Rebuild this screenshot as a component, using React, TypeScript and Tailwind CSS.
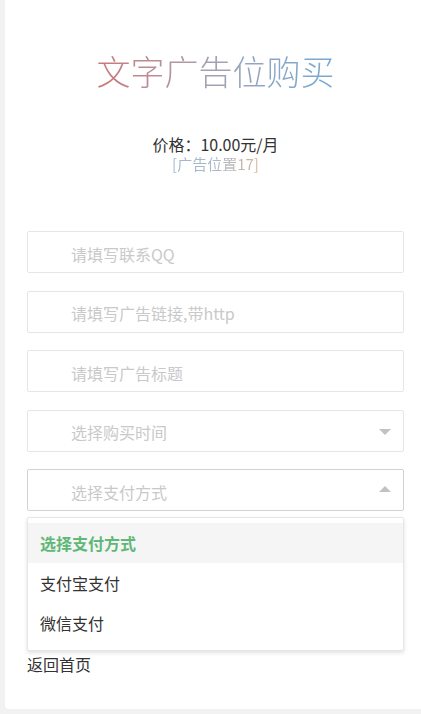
import { useState } from "react";

const fields = [
  { name: "qq", placeholder: "请填写联系QQ" },
  { name: "url", placeholder: "请填写广告链接,带http" },
  { name: "title", placeholder: "请填写广告标题" },
];

const payOptions = ["选择支付方式", "支付宝支付", "微信支付"];

function Caret({ up }: { up?: boolean }) {
  return (
    <span
      className={
        up
          ? "absolute right-[12px] top-1/2 -mt-[4px] h-0 w-0 border-x-[6px] border-b-[6px] border-x-transparent border-b-[#c2c2c2]"
          : "absolute right-[12px] top-1/2 -mt-[2px] h-0 w-0 border-x-[6px] border-t-[6px] border-x-transparent border-t-[#c2c2c2]"
      }
    />
  );
}

export default function App() {
  const [values, setValues] = useState<Record<string, string>>({});
  const [payOpen, setPayOpen] = useState(true);

  return (
    <div
      className="min-h-screen bg-[#f2f2f2] pl-[5px]"
      style={{ fontFamily: '"Noto Sans CJK SC", "Liberation Sans", sans-serif' }}
    >
      <div className="h-[709px] w-[416px] rounded-bl-[4px] bg-white pl-[22px] pr-[17px] pt-[51px]">
        <div className="text-center">
          <h1 className="inline-block bg-gradient-to-r from-[#c97878] via-[#a2a2b4] to-[#72a9d6] bg-clip-text text-[34px] font-light leading-[40px] text-transparent">
            文字广告位购买
          </h1>
        </div>

        <div className="mt-[43px] text-center text-[16px] leading-[20px] text-[#333]">
          价格：10.00元/月
        </div>
        <div className="text-center text-[15px] leading-[20px]">
          <span className="bg-gradient-to-r from-[#9fb6cf] via-[#a9b8c8] to-[#d2b49a] bg-clip-text text-transparent">
            [广告位置17]
          </span>
        </div>

        <form
          className="mt-[57px] flex flex-col gap-[17.5px]"
          onSubmit={(e) => e.preventDefault()}
        >
          {fields.map((f) => (
            <input
              key={f.name}
              value={values[f.name] ?? ""}
              onChange={(e) =>
                setValues((v) => ({ ...v, [f.name]: e.target.value }))
              }
              placeholder={f.placeholder}
              className="h-[42px] w-full rounded-[2px] border border-[#e6e6e6] bg-white pl-[43px] pt-[3px] text-[16px] text-[#333] outline-none placeholder:text-[#c9c9c9]"
            />
          ))}

          <div className="relative h-[42px] rounded-[2px] border border-[#e6e6e6] bg-white">
            <span className="flex h-full items-center pl-[43px] pt-[3px] text-[16px] text-[#c9c9c9]">
              选择购买时间
            </span>
            <Caret />
          </div>

          <div className="relative">
            <div
              onClick={() => setPayOpen((o) => !o)}
              className="relative h-[42px] cursor-pointer rounded-[2px] border border-[#d2d2d2] bg-white"
            >
              <span className="flex h-full items-center pl-[43px] pt-[3px] text-[16px] text-[#c9c9c9]">
                选择支付方式
              </span>
              <Caret up={payOpen} />
            </div>

            {payOpen ? (
              <ul className="absolute left-0 right-0 top-[48px] z-10 rounded-[2px] border border-[#e6e6e6] bg-white pb-[7px] pt-[5px] shadow-[0_2px_4px_rgba(0,0,0,0.12)]">
                {payOptions.map((opt, i) => (
                  <li
                    key={opt}
                    className={
                      i === 0
                        ? "flex h-[40px] items-center bg-[#f5f5f5] pl-[12px] text-[16px] font-bold text-[#5fb878]"
                        : "flex h-[40px] items-center pl-[12px] text-[16px] text-[#333]"
                    }
                  >
                    {opt}
                  </li>
                ))}
              </ul>
            ) : null}
          </div>

          <button
            type="submit"
            className="h-[42px] w-full rounded-[2px] bg-[#009688] text-[16px] text-white"
          >
            立即购买
          </button>
        </form>

        <a href="#" className="mt-[83px] block text-[16px] leading-[20px] text-[#333]">
          返回首页
        </a>
      </div>
    </div>
  );
}
